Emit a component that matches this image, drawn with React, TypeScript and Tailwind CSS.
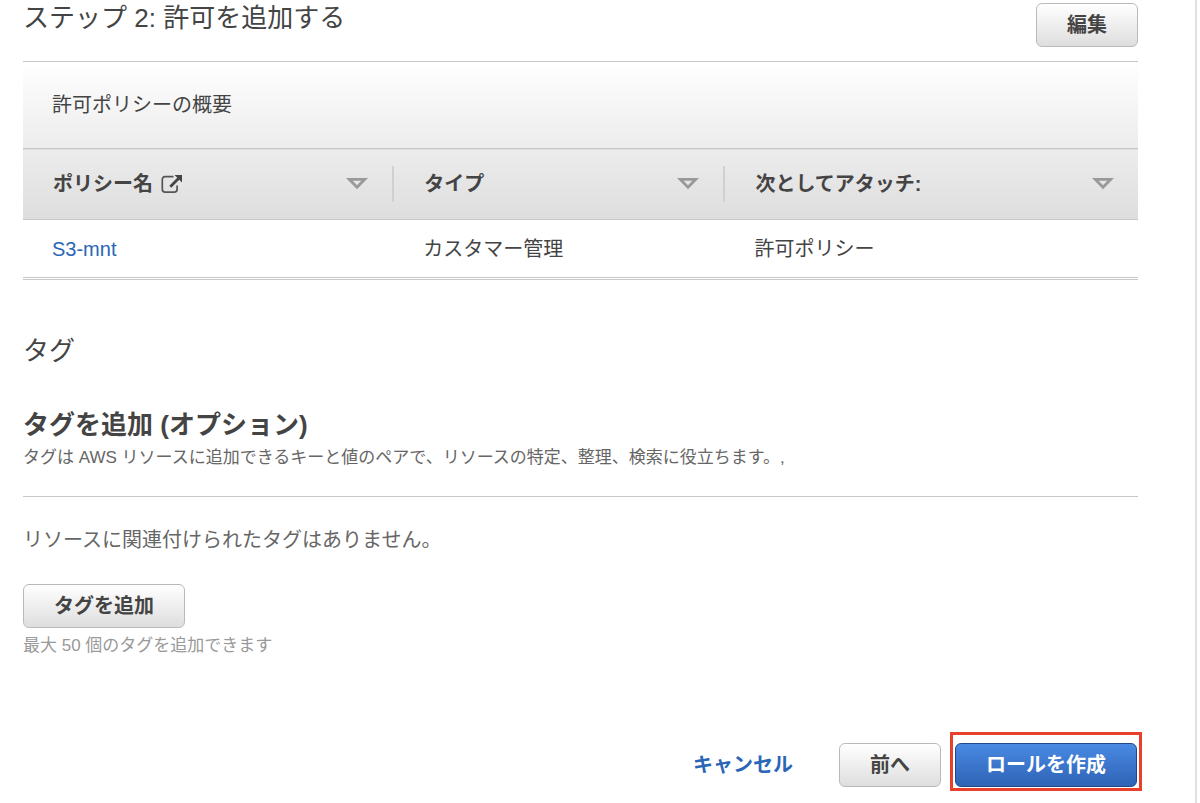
import clsx from 'clsx'
import { ReactNode } from 'react'

type Policy = {
  name: string
  type: string
  attachedAs: string
}

const policies: Policy[] = [{ name: 'S3-mnt', type: 'カスタマー管理', attachedAs: '許可ポリシー' }]

const ExternalLinkIcon = () => (
  <svg width="22" height="20" viewBox="0 0 22 20" fill="none" aria-hidden="true">
    <path
      d="M12.5 2.7H4.2C2.4 2.7 1.3 3.8 1.3 5.6V15.3C1.3 17.1 2.4 18.2 4.2 18.2H13.2C15 18.2 16.1 17.1 16.1 15.3V11.5"
      stroke="#555"
      strokeWidth="1.7"
    />
    <path d="M9.3 12.7L17.5 4.5" stroke="#444" strokeWidth="2.8" />
    <path d="M13.5 1H21V8.5Z" fill="#444" />
  </svg>
)

const SortIcon = () => (
  <svg width="22" height="14" viewBox="0 0 22 14" fill="none" aria-hidden="true">
    <path d="M3.2 2.3H18.8L11 10.3Z" stroke="#999" strokeWidth="2.8" />
  </svg>
)

const Button = ({ children, primary = false }: { children: ReactNode; primary?: boolean }) => (
  <button
    type="button"
    className={clsx(
      'h-11 rounded-md border bg-linear-to-b px-[30px] text-xl leading-[30px] font-bold whitespace-nowrap',
      primary
        ? 'border-[#1f4985] from-[#4a8ae4] to-[#2e63b5] text-white'
        : 'border-[#bababa] from-white to-[#dedede] text-[#444]',
    )}
  >
    {children}
  </button>
)

const HeaderCell = ({
  children,
  className,
  last = false,
}: {
  children: ReactNode
  className?: string
  last?: boolean
}) => (
  <th scope="col" className={clsx('p-0 text-left font-bold', className)}>
    <div
      className={clsx('flex h-9 items-center justify-between pl-[30px] pr-6', !last && 'border-r-2 border-[#d0d0d0]')}
    >
      <span className="flex items-center gap-2">{children}</span>
      <SortIcon />
    </div>
  </th>
)

const PolicyTable = () => (
  <section className="mt-[14px] border-t border-[#c8c8c8]">
    <h3 className="h-[86px] bg-linear-to-b from-white to-[#ececec] px-[29px] py-7 text-xl leading-[30px]">
      許可ポリシーの概要
    </h3>
    <table className="w-full table-fixed border-collapse text-xl leading-[30px]">
      <thead>
        <tr className="h-[71px] border-y border-[#c8c8c8] bg-linear-to-b from-[#ececec] to-[#dedede]">
          <HeaderCell className="w-[33.3%]">
            ポリシー名 <ExternalLinkIcon />
          </HeaderCell>
          <HeaderCell className="w-[29.7%]">タイプ</HeaderCell>
          <HeaderCell last>次としてアタッチ:</HeaderCell>
        </tr>
      </thead>
      <tbody>
        {policies.map((policy) => (
          <tr key={policy.name} className="h-[59px] border-b-3 border-double border-[#c8c8c8]">
            <td className="px-[29px]">
              <a href="#policy" className="text-[#2a65b8]">
                {policy.name}
              </a>
            </td>
            <td className="px-[29px]">{policy.type}</td>
            <td className="px-[29px]">{policy.attachedAs}</td>
          </tr>
        ))}
      </tbody>
    </table>
  </section>
)

const App = () => {
  return (
    <div className="mr-[3px] min-h-screen border-r-2 border-[#dde1e2] bg-white pt-[3px] pl-[23px] pr-[57px] font-['Liberation_Sans','Noto_Sans_CJK_JP',sans-serif] text-[#444]">
      <header className="flex items-start justify-between">
        <h2 className="text-[26px] leading-[30px]">ステップ 2: 許可を追加する</h2>
        <Button>編集</Button>
      </header>
      <PolicyTable />

      <section className="mt-14">
        <h2 className="text-[26px] leading-[30px]">タグ</h2>
        <h3 className="mt-11 text-[26px] leading-[30px] font-bold">タグを追加 (オプション)</h3>
        <p className="mt-[5px] border-b border-[#c8c8c8] pb-[25px] text-[17px] leading-[26px] text-[#666]">
          タグは AWS リソースに追加できるキーと値のペアで、リソースの特定、整理、検索に役立ちます。,
        </p>
        <p className="mt-7 mb-[29px] text-xl leading-[30px] text-[#666]">リソースに関連付けられたタグはありません。</p>
        <Button>タグを追加</Button>
        <p className="mt-[5px] text-[17px] leading-[26px] text-[#999]">最大 50 個のタグを追加できます</p>
      </section>

      <footer className="mt-[73px] -mr-1 flex items-end justify-end">
        <a href="#cancel" className="mr-[46px] mb-[11px] text-xl leading-[30px] font-bold text-[#2a65b8]">
          キャンセル
        </a>
        <div className="mb-1">
          <Button>前へ</Button>
        </div>
        <div className="ml-[9px] flex border-3 border-[#e8402a] px-0.5 pt-2 pb-px">
          <Button primary>ロールを作成</Button>
        </div>
      </footer>
    </div>
  )
}

export default App
